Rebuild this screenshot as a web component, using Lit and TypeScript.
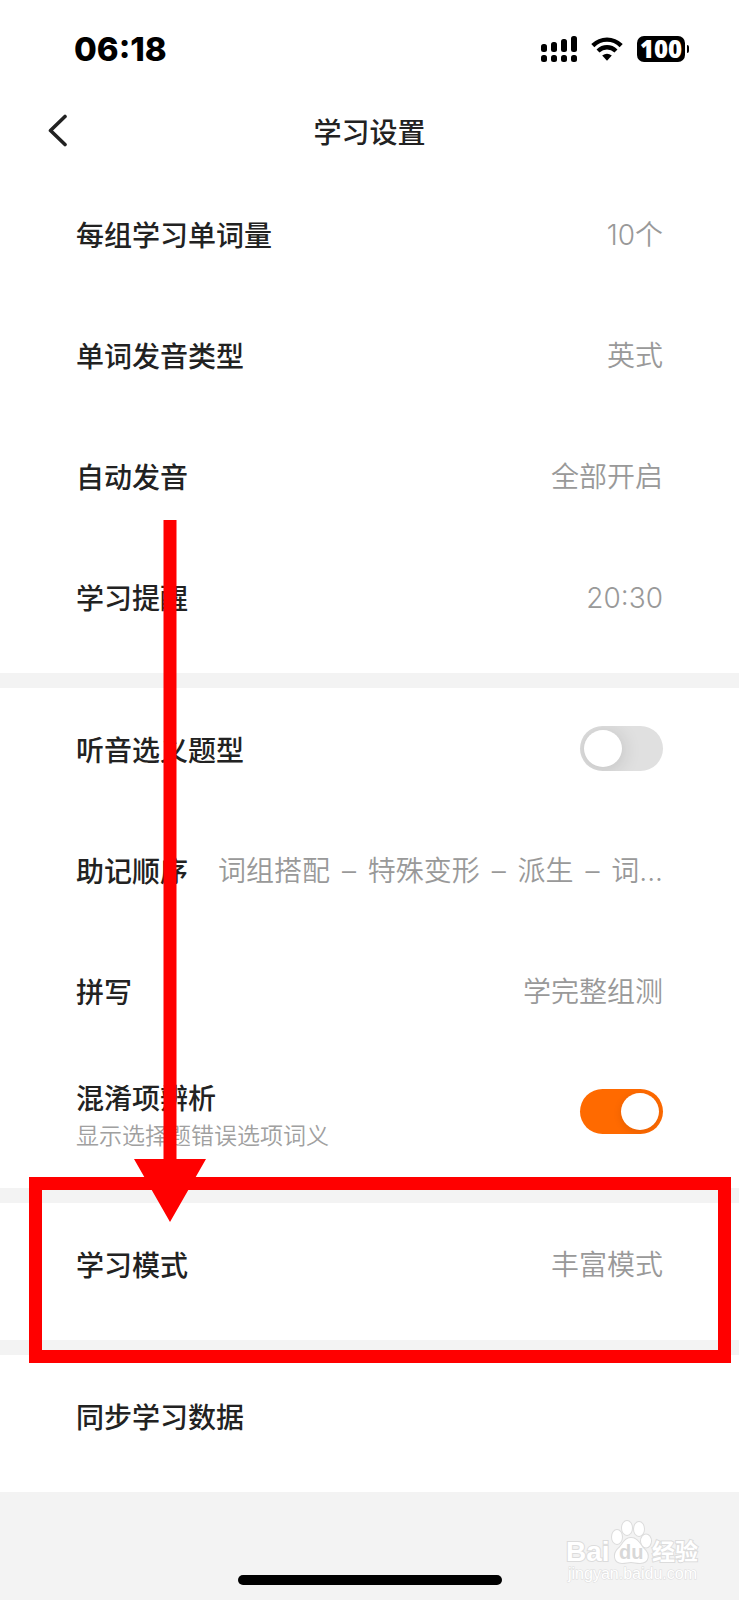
import { LitElement, html, css, svg, nothing } from "lit";
import { customElement, property } from "lit/decorators.js";

@customElement("status-bar")
class StatusBar extends LitElement {
  static styles = css`
    :host {
      display: flex;
      align-items: center;
      justify-content: space-between;
      height: 98px;
      padding: 0 50px 0 74px;
      color: #000;
      font-family: Inter, "Liberation Sans", sans-serif;
    }
    .time {
      font-size: 33px;
      font-weight: 800;
      line-height: 40px;
    }
    .icons {
      display: flex;
      align-items: center;
      gap: 14px;
    }
    .icons svg {
      display: block;
    }
    .battery {
      display: flex;
      align-items: center;
      gap: 2px;
    }
    .level {
      width: 48px;
      height: 26px;
      border-radius: 7px;
      background: #000;
      color: #fff;
      font-family: "Open Sans", sans-serif;
      font-size: 24px;
      font-weight: 800;
      line-height: 26px;
      text-align: center;
    }
    .nub {
      width: 2px;
      height: 8px;
      border-radius: 0 2px 2px 0;
      background: #000;
    }
  `;

  render() {
    const bars = [
      [2, 8, 8],
      [12, 6, 10],
      [22, 3, 13],
      [32, 0, 16],
    ];
    return html`
      <span class="time">06:18</span>
      <div class="icons">
        <svg width="38" height="26" viewBox="0 0 38 26" aria-hidden="true">
          ${bars.map(
            ([x, y, h]) => svg`
              <rect x=${x} y=${y} width="6" height=${h} rx="2.5"></rect>
              <rect x=${x} y="19" width="6" height="7" rx="2.5"></rect>`
          )}
        </svg>
        <svg width="32" height="24" viewBox="0 0 32 24" aria-hidden="true">
          <g fill="none" stroke="#000" stroke-width="4.4">
            <path d="M1.8 8.6Q8 2.6 16 2.6T30.200 8.600"></path>
            <path d="M7 14Q11 10.300 16 10.300T25 14"></path>
          </g>
          <path d="M11.200 18.600Q16 15 20.800 18.600L16 23.800Z"></path>
        </svg>
        <div class="battery">
          <span class="level">100</span>
          <span class="nub"></span>
        </div>
      </div>
    `;
  }
}

@customElement("setting-row")
class SettingRow extends LitElement {
  @property() label = "";
  @property() value = "";
  @property() note = "";
  @property() kind = "link";
  @property({ type: Boolean }) on = false;

  static styles = css`
    :host {
      display: block;
    }
    .row {
      box-sizing: border-box;
      display: flex;
      align-items: center;
      justify-content: space-between;
      gap: 24px;
      width: 100%;
      height: 121px;
      margin: 0;
      padding: 0 76px;
      border: 0;
      background: none;
      font: inherit;
      text-align: left;
      cursor: pointer;
    }
    .text {
      display: flex;
      flex: none;
      flex-direction: column;
    }
    .label {
      color: #222;
      font-size: 28px;
      font-weight: 450;
      line-height: 40px;
      white-space: nowrap;
    }
    .noted {
      padding-top: 4px;
    }
    .note {
      color: #a0a0a0;
      font-size: 23px;
      font-weight: 350;
      line-height: 34px;
      white-space: nowrap;
    }
    .value {
      padding-top: 2px;
      overflow: hidden;
      color: #999;
      font-family: Inter, "Noto Sans CJK SC", sans-serif;
      font-size: 28px;
      font-weight: 350;
      line-height: 40px;
      text-overflow: ellipsis;
      white-space: nowrap;
    }
    .dash {
      margin: 0 4px;
    }
    .switch {
      appearance: none;
      box-sizing: border-box;
      display: flex;
      flex: none;
      width: 83px;
      height: 45px;
      margin: 0;
      padding: 4px;
      overflow: hidden;
      border-radius: 23px;
      background: #e0e0e0;
      cursor: pointer;
    }
    .switch::before {
      content: "";
      width: 38px;
      height: 37px;
      border-radius: 50%;
      background: #fff;
      box-shadow: 0 2px 20px rgba(0, 0, 0, 0.16);
    }
    .switch:checked {
      justify-content: flex-end;
      background: #ff6a00;
    }
    .switch:checked::before {
      box-shadow: 0 2px 8px rgba(0, 0, 0, 0.1);
    }
  `;

  renderValue() {
    const steps = this.value.split(" – ");
    return html`<span class="value"
      >${steps.map((step, i) => (i ? html` <span class="dash">–</span> ${step}` : step))}</span
    >`;
  }

  render() {
    const text = html`<span class="text">
      <span class=${this.note ? "label noted" : "label"}>${this.label}</span>
      ${this.note ? html`<span class="note">${this.note}</span>` : nothing}
    </span>`;
    return this.kind === "switch"
      ? html`<label class="row"
          >${text}<input class="switch" type="checkbox" role="switch" .checked=${this.on}
        /></label>`
      : html`<button class="row" type="button">
          ${text}${this.value ? this.renderValue() : nothing}
        </button>`;
  }
}

@customElement("baidu-mark")
class BaiduMark extends LitElement {
  static styles = css`
    :host {
      display: block;
    }
    svg {
      display: block;
      overflow: visible;
    }
    .shape {
      fill: #fff;
      stroke: #dcdcdc;
      stroke-width: 2;
      paint-order: stroke;
    }
    .word {
      font: 700 28px "Liberation Sans", sans-serif;
    }
    .du {
      fill: #d8d8d8;
      font: 700 20px "Liberation Sans", sans-serif;
    }
    .cjk {
      font: 700 23px "Noto Sans CJK SC", sans-serif;
    }
    .url {
      stroke-width: 1;
      font: 400 16px "Liberation Sans", sans-serif;
    }
  `;

  render() {
    return html`<svg width="136" height="66" viewBox="0 0 136 66" role="img" aria-label="Baidu 经验">
      <text class="shape word" x="2" y="43">Bai</text>
      <ellipse class="shape" cx="53" cy="19" rx="5" ry="7"></ellipse>
      <ellipse class="shape" cx="63" cy="10" rx="5" ry="7"></ellipse>
      <ellipse class="shape" cx="75" cy="11" rx="5" ry="7"></ellipse>
      <ellipse class="shape" cx="82" cy="23" rx="5" ry="6.500"></ellipse>
      <path
        class="shape"
        d="M67 20C74 20 76 27 80 31C86 36 85 45 76 45C72 45 70 44 67 44C64 44 62 45 58 45C50 45 49 36 54 31C59 27 60 20 67 20Z"
      ></path>
      <text class="du" x="55" y="41">du</text>
      <text class="shape cjk" x="88" y="42">经验</text>
      <text class="shape url" x="4" y="61">jingyan.baidu.com</text>
    </svg>`;
  }
}

@customElement("app-root")
class AppRoot extends LitElement {
  static styles = css`
    :host {
      display: flex;
      flex-direction: column;
      min-height: 100vh;
      background: #f3f3f3;
      font-family: "Noto Sans CJK SC", sans-serif;
    }
    .top {
      padding-bottom: 9px;
      background: #fff;
    }
    .nav {
      display: grid;
      grid-template-columns: 80px 1fr 80px;
      align-items: center;
      height: 66px;
    }
    .back {
      display: flex;
      justify-content: flex-end;
      margin: 0;
      padding: 0 12px 0 0;
      border: 0;
      background: none;
      cursor: pointer;
    }
    .title {
      margin: 0;
      color: #222;
      font-size: 28px;
      font-weight: 450;
      line-height: 40px;
      text-align: center;
    }
    .groups {
      display: flex;
      flex-direction: column;
      gap: 15px;
    }
    .group {
      padding-bottom: 16px;
      background: #fff;
    }
    .marked {
      position: relative;
    }
    .frame {
      position: absolute;
      z-index: 1;
      inset: -26px 8px -23px 29px;
      border: 13px solid #f00;
      pointer-events: none;
    }
    .arrow {
      position: absolute;
      z-index: 2;
      bottom: 118px;
      left: 134px;
      fill: #f00;
      pointer-events: none;
    }
    .foot {
      position: relative;
      display: flex;
      flex: 1;
      align-items: flex-end;
      justify-content: center;
      min-height: 93px;
      padding-bottom: 15px;
    }
    .home {
      width: 264px;
      height: 10px;
      border-radius: 5px;
      background: #000;
    }
    .mark {
      position: absolute;
      right: 39px;
      bottom: 16px;
    }
  `;

  render() {
    return html`
      <header class="top">
        <status-bar></status-bar>
        <nav class="nav">
          <button class="back" type="button" aria-label="返回">
            <svg width="20" height="34" viewBox="0 0 20 34" aria-hidden="true">
              <path
                d="M17 2.500L2.500 16.500L17 30.500"
                fill="none"
                stroke="#222"
                stroke-width="3.600"
                stroke-linecap="round"
                stroke-linejoin="round"
              ></path>
            </svg>
          </button>
          <h1 class="title">学习设置</h1>
        </nav>
      </header>
      <main class="groups">
        <section class="group">
          <setting-row label="每组学习单词量" value="10个"></setting-row>
          <setting-row label="单词发音类型" value="英式"></setting-row>
          <setting-row label="自动发音" value="全部开启"></setting-row>
          <setting-row label="学习提醒" value="20:30"></setting-row>
        </section>
        <section class="group">
          <setting-row label="听音选义题型" kind="switch"></setting-row>
          <setting-row label="助记顺序" value="词组搭配 – 特殊变形 – 派生 – 词..."></setting-row>
          <setting-row label="拼写" value="学完整组测"></setting-row>
          <setting-row label="混淆项辨析" note="显示选择题错误选项词义" kind="switch" on></setting-row>
        </section>
        <section class="group marked">
          <setting-row label="学习模式" value="丰富模式"></setting-row>
          <div class="frame"></div>
          <svg class="arrow" width="72" height="702" viewBox="0 0 72 702" aria-hidden="true">
            <path d="M29.500 0H42.500V639H72L36 702L0 639H29.500Z"></path>
          </svg>
        </section>
        <section class="group">
          <setting-row label="同步学习数据"></setting-row>
        </section>
      </main>
      <footer class="foot">
        <div class="home"></div>
        <baidu-mark class="mark"></baidu-mark>
      </footer>
    `;
  }
}
